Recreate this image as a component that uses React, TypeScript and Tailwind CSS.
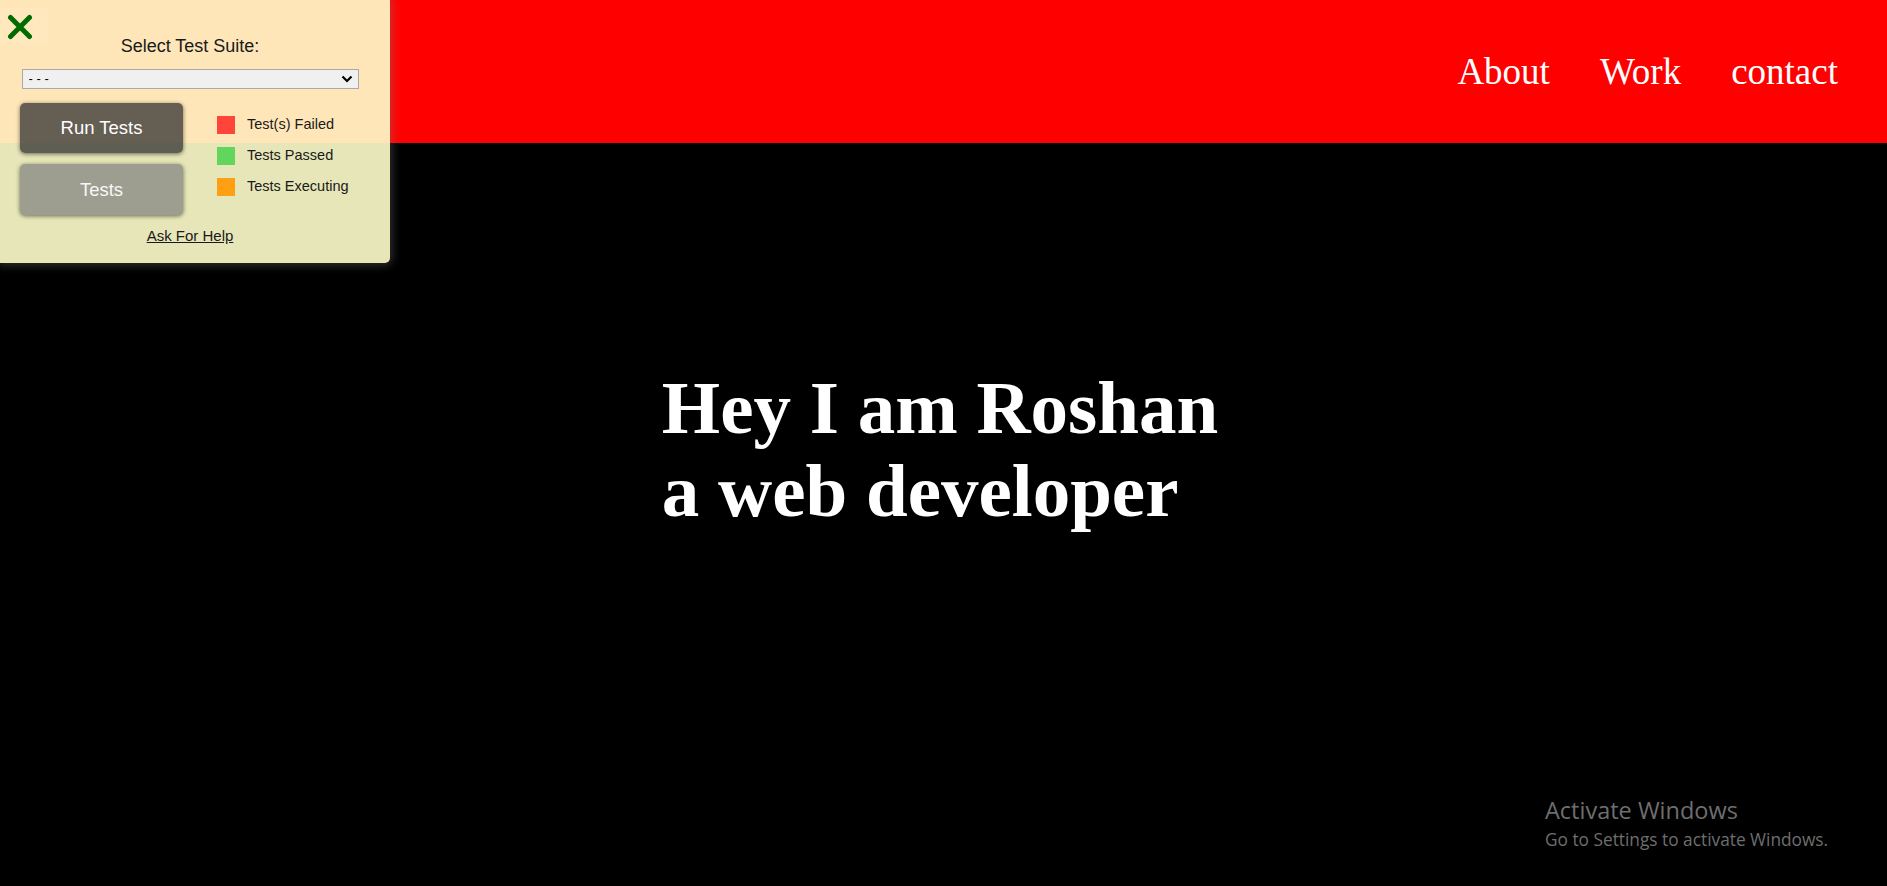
import React from "react";

export default function App() {
  return (
    <div className="relative h-[886px] w-full overflow-hidden bg-black">
      {/* Header */}
      <header className="flex h-[143px] items-center justify-end gap-[50px] bg-[#ff0000] pr-[49px] font-['Liberation_Serif',serif] text-[37px] leading-[43px] text-white">
        <a>About</a>
        <a>Work</a>
        <a>contact</a>
      </header>

      {/* Hero */}
      <section className="flex justify-center pr-[7px] pt-[223px]">
        <h1 className="font-['Liberation_Serif',serif] text-[75px] font-bold leading-[83px] text-white">
          Hey I am Roshan
          <br />
          a web developer
        </h1>
      </section>

      {/* Test panel overlay */}
      <div className="absolute left-0 top-0 h-[263px] w-[390px] rounded-br-[5px] bg-[rgba(255,255,204,0.9)] pr-[10px] pt-[36px] font-['Liberation_Sans',Arial,sans-serif] shadow-[0_0_10px_2px_rgba(128,128,128,0.4)]">
        <button className="absolute left-0 top-[8px] flex h-[37px] w-[48px] items-center justify-start bg-[rgba(255,255,255,0.08)] pl-[7px]">
          <svg width="26" height="26" viewBox="0 0 26 26">
            <path d="M3.5 3.5 L22.5 22.5 M22.5 3.5 L3.5 22.5" stroke="#006b00" strokeWidth="5" strokeLinecap="round" fill="none" />
          </svg>
        </button>

        <div className="text-center text-[18px] leading-[21px] text-[#1a1a1a]">Select Test Suite:</div>

        <div className="relative mx-auto mt-[12px] h-[20px] w-[337px]">
          <select className="block h-[20px] w-[337px] appearance-none border border-[#a9a9a9] bg-[#f0f0f0] pl-[6px] text-[13px] leading-[18px] text-black">
            <option>- - -</option>
          </select>
          <svg className="pointer-events-none absolute right-[6px] top-[6px]" width="12" height="8" viewBox="0 0 12 8">
            <path d="M1.5 1.5 L6 6 L10.5 1.5" stroke="#000" strokeWidth="2.2" fill="none" />
          </svg>
        </div>

        <div className="mt-[14px] flex pl-[20px]">
          <div className="flex w-[163px] flex-col">
            <button className="h-[50px] w-[163px] rounded-[5px] bg-[rgba(51,51,51,0.76)] text-[18.5px] text-white shadow-[0_1px_4px_rgba(0,0,0,0.55)]">
              Run Tests
            </button>
            <button className="mt-[11px] h-[51px] w-[163px] rounded-[5px] bg-[#9d9e90] text-[18.5px] text-[#f7f7f7] shadow-[0_1px_4px_rgba(0,0,0,0.55)]">
              Tests
            </button>
          </div>
          <div className="ml-[34px] mt-[13px] flex flex-col gap-[13px] text-[14.5px] text-[#1a1a1a]">
            <div className="flex h-[18px] items-center gap-[12px]">
              <span className="h-[18px] w-[18px] bg-[#ff4439]" />
              <span>Test(s) Failed</span>
            </div>
            <div className="flex h-[18px] items-center gap-[12px]">
              <span className="h-[18px] w-[18px] bg-[#62d65c]" />
              <span>Tests Passed</span>
            </div>
            <div className="flex h-[18px] items-center gap-[12px]">
              <span className="h-[18px] w-[18px] bg-[#ff9f14]" />
              <span>Tests Executing</span>
            </div>
          </div>
        </div>

        <div className="mt-[12px] text-center text-[15px] leading-[17px]">
          <a className="text-[#1a1a1a] underline">Ask For Help</a>
        </div>
      </div>

      {/* Windows watermark */}
      <div className="pointer-events-none absolute left-[1545px] top-[796px] font-['Open_Sans',sans-serif] text-[#6e6e6e]">
        <div className="text-[23.5px] leading-[28px]">Activate Windows</div>
        <div className="mt-[2px] text-[17.3px] leading-[28px]">Go to Settings to activate Windows.</div>
      </div>
    </div>
  );
}
